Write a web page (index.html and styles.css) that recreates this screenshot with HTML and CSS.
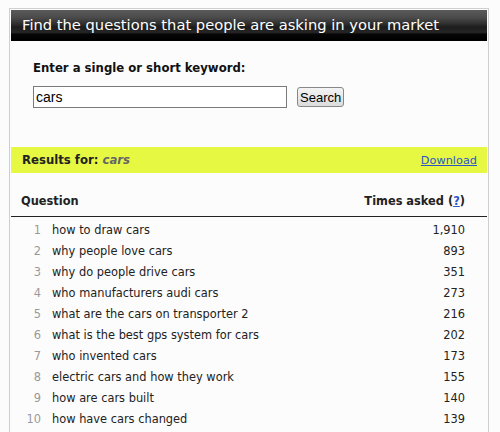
FILE: index.html
```html
<!DOCTYPE html>
<html>
<head>
<meta charset="utf-8">
<link rel="stylesheet" href="styles.css">
</head>
<body>
<div class="panel">
  <div class="header">Find the questions that people are asking in your market</div>
  <form class="search">
    <label class="label" for="kw">Enter a single or short keyword:</label>
    <div class="search-row">
      <input id="kw" class="input" type="text" value="cars">
      <button class="button" type="button">Search</button>
    </div>
  </form>
  <div class="results-bar">
    <div class="results-title">Results for: <em class="term">cars</em></div>
    <a class="download" href="#">Download</a>
  </div>
  <div class="table">
    <div class="thead">
      <div class="th-q">Question</div>
      <div class="th-c">Times asked (<a class="help" href="#">?</a>)</div>
    </div>
    <div class="tbody">
      <div class="row"><span class="num">1</span><span class="q">how to draw cars</span><span class="c">1,910</span></div>
      <div class="row"><span class="num">2</span><span class="q">why people love cars</span><span class="c">893</span></div>
      <div class="row"><span class="num">3</span><span class="q">why do people drive cars</span><span class="c">351</span></div>
      <div class="row"><span class="num">4</span><span class="q">who manufacturers audi cars</span><span class="c">273</span></div>
      <div class="row"><span class="num">5</span><span class="q">what are the cars on transporter 2</span><span class="c">216</span></div>
      <div class="row"><span class="num">6</span><span class="q">what is the best gps system for cars</span><span class="c">202</span></div>
      <div class="row"><span class="num">7</span><span class="q">who invented cars</span><span class="c">173</span></div>
      <div class="row"><span class="num">8</span><span class="q">electric cars and how they work</span><span class="c">155</span></div>
      <div class="row"><span class="num">9</span><span class="q">how are cars built</span><span class="c">140</span></div>
      <div class="row"><span class="num">10</span><span class="q">how have cars changed</span><span class="c">139</span></div>
    </div>
  </div>
</div>
</body>
</html>
```
FILE: styles.css
```css
html, body {
  margin: 0;
  padding: 0;
  background: #fcfcfc;
}
body {
  font-family: "DejaVu Sans", Verdana, sans-serif;
  color: #222;
  font-size: 11.4px;
}
.panel {
  margin: 8px 0 0 9px;
  width: 476px;
  padding: 1px;
  border: 1px solid #cfcfcf;
  border-bottom: none;
  height: 440px;
}
.header {
  height: 31px;
  line-height: 30px;
  padding-left: 11px;
  color: #fff;
  font-size: 14.7px;
  background: linear-gradient(#5a5a5a 0, #4a4a4a 25%, #2e2e2e 45%, #1c1c1c 55%, #262626 72%, #060606 78%, #000 100%);
}
.search {
  margin: 0;
  padding: 19px 0 0 22px;
  height: 87px;
}
.label {
  display: block;
  font-weight: bold;
  font-size: 11.7px;
  line-height: 16px;
  color: #111;
}
.search-row {
  display: flex;
  align-items: center;
  gap: 10px;
  margin-top: 10px;
}
.input {
  box-sizing: border-box;
  width: 254px;
  height: 22px;
  margin: 0;
  border: 1px solid #7a7a7a;
  padding: 0 2px;
  font-family: "Liberation Sans", Arial, sans-serif;
  font-size: 14px;
  color: #000;
  background: #fff;
}
.button {
  box-sizing: border-box;
  height: 20px;
  margin: 0;
  padding: 0 2px;
  border: 1px solid #888;
  border-radius: 3px;
  background: linear-gradient(#f4f4f4, #dcdcdc);
  font-family: "Liberation Sans", Arial, sans-serif;
  font-size: 13px;
  color: #000;
}
.results-bar {
  display: flex;
  justify-content: space-between;
  align-items: center;
  height: 26px;
  padding: 0 10px 0 11px;
  background: #e6f842;
}
.results-title {
  font-weight: bold;
  font-size: 11.7px;
  color: #222;
}
.term {
  font-weight: bold;
  color: #666;
  font-style: italic;
}
.download {
  color: #2a56c6;
  font-size: 11.3px;
}
.thead {
  display: flex;
  justify-content: space-between;
  padding: 21px 22px 7px 10px;
  line-height: 15px;
  font-weight: bold;
  border-bottom: 1px solid #222;
}
.help {
  color: #2a56c6;
}
.tbody {
  padding-top: 3px;
}
.row {
  display: grid;
  grid-template-columns: 30px 1fr auto;
  column-gap: 11px;
  height: 21px;
  line-height: 21px;
  padding-right: 22px;
}
.num {
  text-align: right;
  color: #999;
}
.c {
  text-align: right;
}
```
